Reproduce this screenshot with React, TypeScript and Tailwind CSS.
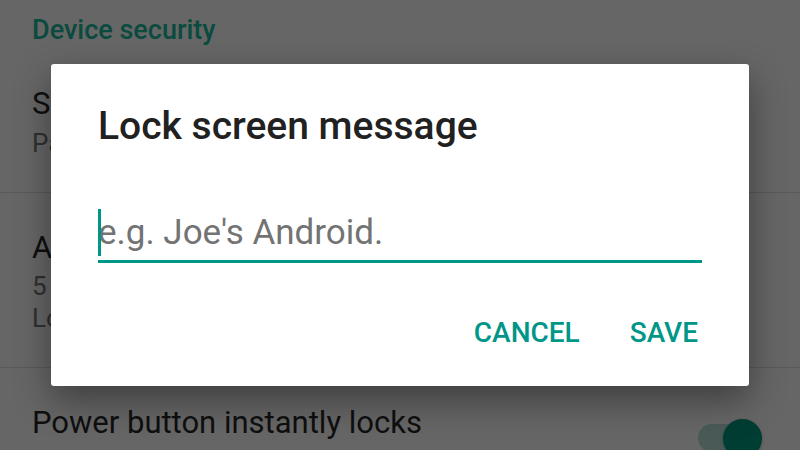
const teal = "text-[#009688]";

function Toggle() {
  return (
    <div className="relative mt-[14px] h-[39px] w-[64px] shrink-0">
      <div className="absolute left-0 top-[5px] h-[28px] w-[58px] rounded-full bg-[#4a5b57]" />
      <div className="absolute right-0 top-0 h-[39px] w-[39px] rounded-full bg-[#003d33] shadow-[0_1px_3px_rgba(0,0,0,0.3)]" />
    </div>
  );
}

export default function App() {
  return (
    <div className="relative h-[450px] w-[800px] overflow-hidden bg-[#666666] font-['Roboto',sans-serif]">
      {/* settings list behind the scrim */}
      <div className="flex flex-col">
        <div className="pl-[32px] pt-[14px] text-[27px] font-medium leading-[32px] text-[#0b4a3f]">
          Device security
        </div>

        <div className="flex flex-col border-b border-[#595959] pb-[33px] pl-[32px] pt-[40px]">
          <div className="text-[31px] leading-[36px] text-[#0f0f0f]">Screen lock</div>
          <div className="mt-[5px] text-[26px] leading-[32px] text-[#2f2f2f]">Pattern</div>
        </div>

        <div className="flex flex-col border-b border-[#595959] pb-[33px] pl-[32px] pt-[37px]">
          <div className="text-[31px] leading-[36px] text-[#0f0f0f]">Automatically lock</div>
          <div className="mt-[4px] text-[26px] leading-[32px] text-[#2f2f2f]">
            5 seconds after sleep, except when kept
          </div>
          <div className="text-[26px] leading-[32px] text-[#2f2f2f]">Locked by Smart Lock</div>
        </div>

        <div className="flex items-start justify-between pl-[32px] pr-[38px] pt-[37px]">
          <div className="text-[31px] leading-[36px] text-[#0f0f0f]">Power button instantly locks</div>
          <Toggle />
        </div>
      </div>

      {/* dialog */}
      <div className="absolute left-[51px] top-[64px] flex h-[322px] w-[698px] flex-col rounded-[3px] bg-white shadow-[0_14px_36px_rgba(0,0,0,0.4)]">
        <div className="px-[47px] pt-[40px] text-[39px] font-medium leading-[44px] text-[#212121]">
          Lock screen message
        </div>

        <div className="mx-[47px] mt-[61px] border-b-[3px] border-[#009688] pb-[3px]">
          <div className="relative text-[35px] leading-[48px] text-[#737373]">
            <div className="absolute left-0 top-0 h-[47px] w-[3px] bg-[#009688]" />
            e.g. Joe's Android.
          </div>
        </div>

        <div className="mt-[54px] flex justify-end gap-[50px] pr-[51px]">
          <button className={`${teal} text-[28px] font-medium leading-[32px]`}>CANCEL</button>
          <button className={`${teal} text-[28px] font-medium leading-[32px]`}>SAVE</button>
        </div>
      </div>
    </div>
  );
}
